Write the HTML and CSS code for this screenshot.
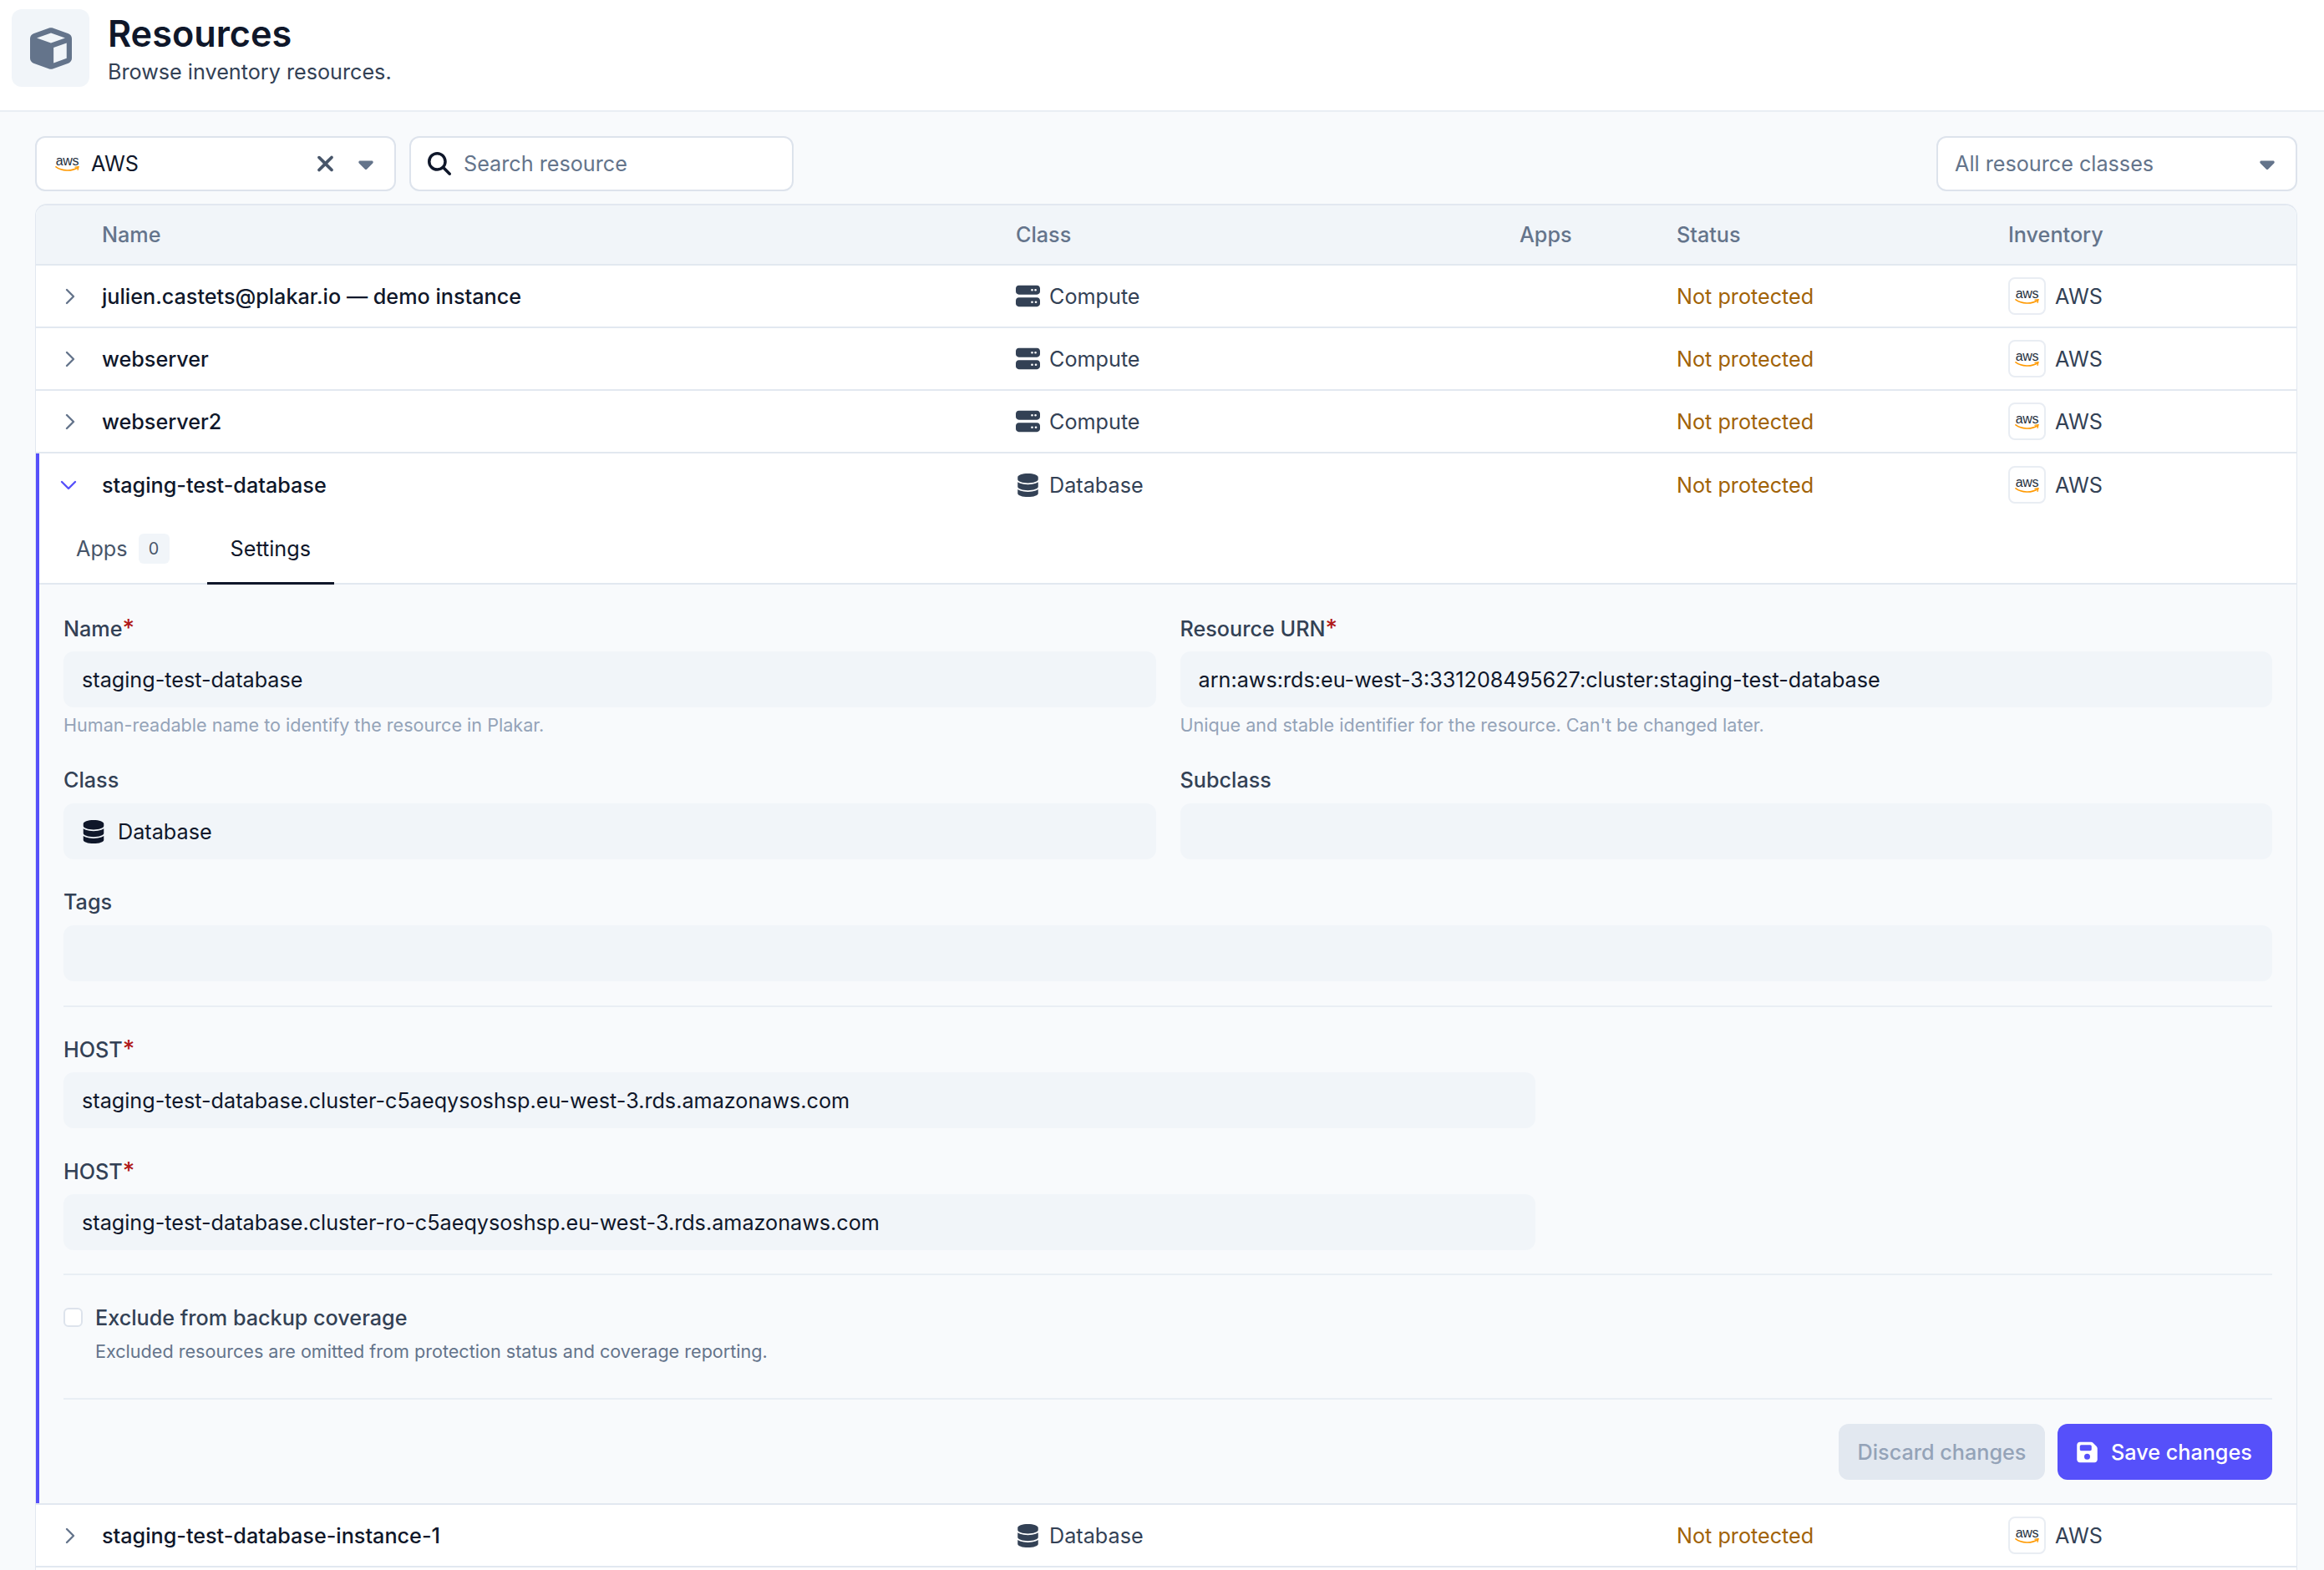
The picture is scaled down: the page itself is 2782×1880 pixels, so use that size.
FILE: index.html
```html
<!DOCTYPE html>
<html>
<head>
    <title>Resources</title>
    <link rel="stylesheet" href="styles.css">
</head>
<body>
    <svg class="sprites" xmlns="http://www.w3.org/2000/svg">
        <symbol id="i-cube" viewBox="0 0 512 512"><path d="M234.5 5.7c13.9-5 29.1-5 43.1 0l192 68.6C495 83.4 512 107.5 512 134.6V377.4c0 27-17 51.2-42.5 60.3l-192 68.6c-13.9 5-29.1 5-43.1 0l-192-68.6C17 428.6 0 404.5 0 377.4V134.6c0-27 17-51.2 42.5-60.3l192-68.6zM256 66L82.3 128 256 190l173.7-62L256 66zm32 368.6l160-57.1v-188L288 246.6v188z"/></symbol>
        <symbol id="i-server" viewBox="0 0 512 512"><path d="M64 32C28.7 32 0 60.7 0 96v64c0 35.3 28.7 64 64 64H448c35.3 0 64-28.7 64-64V96c0-35.3-28.7-64-64-64H64zm280 72a24 24 0 1 1 0 48 24 24 0 1 1 0-48zm48 24a24 24 0 1 1 48 0 24 24 0 1 1 -48 0zM64 288c-35.3 0-64 28.7-64 64v64c0 35.3 28.7 64 64 64H448c35.3 0 64-28.7 64-64V352c0-35.3-28.7-64-64-64H64zm280 72a24 24 0 1 1 0 48 24 24 0 1 1 0-48zm56 24a24 24 0 1 1 48 0 24 24 0 1 1 -48 0z"/></symbol>
        <symbol id="i-database" viewBox="0 0 448 512"><path d="M448 80v48c0 44.2-100.3 80-224 80S0 172.2 0 128V80C0 35.8 100.3 0 224 0S448 35.8 448 80zM393.2 214.7c20.8-7.4 39.9-16.9 54.8-28.6V288c0 44.2-100.3 80-224 80S0 332.2 0 288V186.1c14.9 11.8 34 21.2 54.8 28.6C99.7 230.7 159.5 240 224 240s124.3-9.3 169.2-25.3zM0 346.1c14.9 11.8 34 21.2 54.8 28.6C99.7 390.7 159.5 400 224 400s124.3-9.3 169.2-25.3c20.8-7.4 39.9-16.9 54.8-28.6V432c0 44.2-100.3 80-224 80S0 476.2 0 432V346.1z"/></symbol>
        <symbol id="i-save" viewBox="0 0 448 512"><path d="M64 32C28.7 32 0 60.7 0 96V416c0 35.3 28.7 64 64 64H384c35.3 0 64-28.7 64-64V173.3c0-17-6.7-33.3-18.7-45.3L352 50.7C340 38.7 323.7 32 306.7 32H64zm0 96c0-17.7 14.3-32 32-32H288c17.7 0 32 14.3 32 32v64c0 17.7-14.3 32-32 32H96c-17.7 0-32-14.3-32-32V128zM224 288a64 64 0 1 1 0 128 64 64 0 1 1 0-128z"/></symbol>
        <symbol id="i-search" viewBox="0 0 512 512"><path d="M416 208c0 45.9-14.9 88.3-40 122.7L502.6 457.4c12.5 12.5 12.5 32.8 0 45.3s-32.8 12.5-45.3 0L330.7 376c-34.4 25.2-76.8 40-122.7 40C93.1 416 0 322.9 0 208S93.1 0 208 0S416 93.1 416 208zM208 352a144 144 0 1 0 0-288 144 144 0 1 0 0 288z"/></symbol>
        <symbol id="i-x" viewBox="0 0 384 512"><path d="M342.6 150.6c12.5-12.5 12.5-32.8 0-45.3s-32.8-12.5-45.3 0L192 210.7 86.6 105.4c-12.5-12.5-32.8-12.5-45.3 0s-12.5 32.8 0 45.3L146.7 256 41.4 361.4c-12.5 12.5-12.5 32.8 0 45.3s32.8 12.5 45.3 0L192 301.3 297.4 406.6c12.5 12.5 32.8 12.5 45.3 0s12.5-32.8 0-45.3L237.3 256 342.6 150.6z"/></symbol>
        <symbol id="i-caret" viewBox="0 0 320 512"><path d="M137.4 374.6c12.5 12.5 32.8 12.5 45.3 0l128-128c9.2-9.2 11.9-22.9 6.9-34.9s-16.6-19.8-29.6-19.8L32 192c-12.9 0-24.6 7.8-29.6 19.8s-2.2 25.7 6.9 34.9l128 128z"/></symbol>
        <symbol id="i-smile" viewBox="0 0 29 7"><path d="M1 .8C8 6 20 6.2 26.6 2" fill="none" stroke="#f90" stroke-width="1.6" stroke-linecap="round"/><path d="M24 1.2l4-.5-.9 3.6" fill="none" stroke="#f90" stroke-width="1.3" stroke-linecap="round"/></symbol>
    </svg>

    <header class="page-header">
        <div class="header-icon"><svg><use href="#i-cube"/></svg></div>
        <div>
            <h1>Resources</h1>
            <p class="subtitle">Browse inventory resources.</p>
        </div>
    </header>

    <main class="content">
        <div class="toolbar">
            <div class="control control-inventory">
                <span class="aws-mark"><span class="aws-word">aws</span><svg class="aws-smile"><use href="#i-smile"/></svg></span>
                <span class="control-value">AWS</span>
                <svg class="icon-x"><use href="#i-x"/></svg>
                <svg class="icon-caret"><use href="#i-caret"/></svg>
            </div>
            <div class="control control-search">
                <svg class="icon-search"><use href="#i-search"/></svg>
                <span class="placeholder">Search resource</span>
            </div>
            <div class="control control-class">
                <span class="placeholder">All resource classes</span>
                <svg class="icon-caret"><use href="#i-caret"/></svg>
            </div>
        </div>

        <div class="table">
            <div class="row row-head">
                <span></span>
                <span>Name</span>
                <span>Class</span>
                <span>Apps</span>
                <span>Status</span>
                <span>Inventory</span>
            </div>

            <div class="row">
                <svg class="chevron" viewBox="0 0 12 20"><path d="M2 2l8 8-8 8"/></svg>
                <span class="name">julien.castets@plakar.io — demo instance</span>
                <span class="cell-class"><svg class="icon-class"><use href="#i-server"/></svg>Compute</span>
                <span></span>
                <span class="status">Not protected</span>
                <span class="inventory"><span class="aws-box"><span class="aws-mark"><span class="aws-word">aws</span><svg class="aws-smile"><use href="#i-smile"/></svg></span></span>AWS</span>
            </div>
            <div class="row">
                <svg class="chevron" viewBox="0 0 12 20"><path d="M2 2l8 8-8 8"/></svg>
                <span class="name">webserver</span>
                <span class="cell-class"><svg class="icon-class"><use href="#i-server"/></svg>Compute</span>
                <span></span>
                <span class="status">Not protected</span>
                <span class="inventory"><span class="aws-box"><span class="aws-mark"><span class="aws-word">aws</span><svg class="aws-smile"><use href="#i-smile"/></svg></span></span>AWS</span>
            </div>
            <div class="row">
                <svg class="chevron" viewBox="0 0 12 20"><path d="M2 2l8 8-8 8"/></svg>
                <span class="name">webserver2</span>
                <span class="cell-class"><svg class="icon-class"><use href="#i-server"/></svg>Compute</span>
                <span></span>
                <span class="status">Not protected</span>
                <span class="inventory"><span class="aws-box"><span class="aws-mark"><span class="aws-word">aws</span><svg class="aws-smile"><use href="#i-smile"/></svg></span></span>AWS</span>
            </div>

            <div class="expanded">
                <div class="row row-open">
                    <svg class="chevron chevron-open" viewBox="0 0 20 12"><path d="M2 2l8 8 8-8"/></svg>
                    <span class="name">staging-test-database</span>
                    <span class="cell-class"><svg class="icon-class icon-db"><use href="#i-database"/></svg>Database</span>
                    <span></span>
                    <span class="status">Not protected</span>
                    <span class="inventory"><span class="aws-box"><span class="aws-mark"><span class="aws-word">aws</span><svg class="aws-smile"><use href="#i-smile"/></svg></span></span>AWS</span>
                </div>

                <div class="tabs">
                    <div class="tab">Apps <span class="tab-count">0</span></div>
                    <div class="tab tab-active">Settings</div>
                </div>

                <div class="settings">
                    <div class="grid-two">
                        <div class="field">
                            <label>Name<span class="req">*</span></label>
                            <div class="input">staging-test-database</div>
                            <p class="hint">Human-readable name to identify the resource in Plakar.</p>
                        </div>
                        <div class="field">
                            <label>Resource URN<span class="req">*</span></label>
                            <div class="input">arn:aws:rds:eu-west-3:331208495627:cluster:staging-test-database</div>
                            <p class="hint">Unique and stable identifier for the resource. Can't be changed later.</p>
                        </div>
                        <div class="field">
                            <label>Class</label>
                            <div class="input"><svg class="icon-input"><use href="#i-database"/></svg>Database</div>
                        </div>
                        <div class="field">
                            <label>Subclass</label>
                            <div class="input"></div>
                        </div>
                    </div>
                    <div class="field field-tags">
                        <label>Tags</label>
                        <div class="input"></div>
                    </div>

                    <hr class="divider">

                    <div class="hosts">
                        <div class="field">
                            <label>HOST<span class="req">*</span></label>
                            <div class="input">staging-test-database.cluster-c5aeqysoshsp.eu-west-3.rds.amazonaws.com</div>
                        </div>
                        <div class="field">
                            <label>HOST<span class="req">*</span></label>
                            <div class="input">staging-test-database.cluster-ro-c5aeqysoshsp.eu-west-3.rds.amazonaws.com</div>
                        </div>
                    </div>

                    <hr class="divider divider-exclude">

                    <div class="exclude">
                        <span class="checkbox"></span>
                        <div>
                            <div class="exclude-title">Exclude from backup coverage</div>
                            <div class="exclude-desc">Excluded resources are omitted from protection status and coverage reporting.</div>
                        </div>
                    </div>

                    <hr class="divider divider-actions">

                    <div class="actions">
                        <button class="btn btn-discard">Discard changes</button>
                        <button class="btn btn-save"><svg class="icon-save"><use href="#i-save"/></svg>Save changes</button>
                    </div>
                </div>
            </div>

            <div class="row">
                <svg class="chevron" viewBox="0 0 12 20"><path d="M2 2l8 8-8 8"/></svg>
                <span class="name">staging-test-database-instance-1</span>
                <span class="cell-class"><svg class="icon-class icon-db"><use href="#i-database"/></svg>Database</span>
                <span></span>
                <span class="status">Not protected</span>
                <span class="inventory"><span class="aws-box"><span class="aws-mark"><span class="aws-word">aws</span><svg class="aws-smile"><use href="#i-smile"/></svg></span></span>AWS</span>
            </div>
            <div class="row-rest"></div>
        </div>
    </main>
</body>
</html>
```

FILE: styles.css
```css
* {
    box-sizing: border-box;
}

html, body {
    height: 1880px;
    overflow: hidden;
}

body {
    margin: 0;
    background: #f8fafc;
    color: #0f172a;
    font-family: Inter, "Liberation Sans", sans-serif;
    font-size: 25.2px;
    line-height: 30px;
}

.sprites {
    display: none;
}

svg {
    fill: currentColor;
    flex: none;
}

/* page header */
.page-header {
    height: 134px;
    padding: 11px 14px;
    display: flex;
    gap: 22px;
    background: #fff;
    border-bottom: 2px solid #e9eef4;
}

.header-icon {
    width: 93px;
    height: 93px;
    display: flex;
    align-items: center;
    justify-content: center;
    border-radius: 12px;
    background: #f1f5f9;
    color: #64748b;
}

.header-icon svg {
    width: 50px;
    height: 50px;
}

h1 {
    margin: 2px 0 0;
    font-size: 43.2px;
    line-height: 54px;
    font-weight: 600;
}

.subtitle {
    margin: 4px 0 0;
    color: #334155;
}

/* filters */
.content {
    padding: 29px 32px 0 42px;
}

.toolbar {
    display: flex;
    gap: 16px;
    margin-bottom: 15px;
}

.control {
    height: 66px;
    display: flex;
    align-items: center;
    background: #fff;
    border: 2px solid #dde3ec;
    border-radius: 12px;
}

.control-inventory {
    width: 432px;
    padding: 0 25px 0 22px;
}

.control-value {
    margin-left: 14px;
    flex: 1;
}

.control-search {
    width: 460px;
    padding: 0 20px;
    gap: 15px;
}

.control-class {
    width: 432px;
    margin-left: auto;
    padding: 0 25px 0 20px;
    justify-content: space-between;
}

.placeholder {
    color: #64748b;
}

.icon-x {
    width: 23px;
    height: 30px;
    margin-right: 28px;
    color: #475569;
}

.icon-caret {
    width: 18px;
    height: 28px;
    color: #64748b;
}

.icon-search {
    width: 28px;
    height: 28px;
}

/* aws logo */
.aws-mark {
    display: inline-flex;
    flex-direction: column;
    align-items: center;
    width: 29px;
    color: #252f3e;
}

.aws-word {
    font-family: "Liberation Sans", sans-serif;
    font-size: 16px;
    line-height: 13px;
    letter-spacing: -0.4px;
}

.aws-smile {
    width: 29px;
    height: 7px;
}

.aws-box {
    width: 45px;
    height: 45px;
    display: flex;
    align-items: center;
    justify-content: center;
    background: #fff;
    border: 2px solid #e9edf3;
    border-radius: 8px;
}

/* table */
.table {
    background: #fff;
    border: solid #e2e8f0;
    border-width: 2px 1px 0;
    border-radius: 14px 14px 0 0;
    overflow: hidden;
}

.row {
    height: 75px;
    display: grid;
    grid-template-columns: 79px 1094px 603px 188px 397px 1fr;
    align-items: center;
    border-bottom: 2px solid #e2e8f0;
}

.row-head {
    height: 72px;
    background: #f1f5f9;
    color: #64748b;
    font-weight: 500;
}

.row-open {
    border-bottom: 0;
}

.chevron {
    width: 12px;
    height: 20px;
    margin-left: 35px;
    fill: none;
    stroke: #64748b;
    stroke-width: 2.4;
    stroke-linecap: round;
    stroke-linejoin: round;
}

.chevron-open {
    width: 20px;
    height: 12px;
    margin-left: 29px;
    stroke: #5650fa;
}

.name {
    font-weight: 500;
}

.cell-class {
    display: flex;
    align-items: center;
    gap: 11px;
    color: #334155;
}

.icon-class {
    width: 29px;
    height: 29px;
    color: #334155;
}

.icon-db {
    width: 29px;
    height: 28px;
}

.status {
    color: #a16207;
}

.inventory {
    display: flex;
    align-items: center;
    gap: 11px;
    color: #334155;
}

.row-rest {
    height: 5px;
}

/* expanded row */
.expanded {
    position: relative;
    border-bottom: 2px solid #e2e8f0;
}

.expanded::before {
    content: "";
    position: absolute;
    left: 0;
    top: 0;
    bottom: 0;
    width: 4px;
    background: #5650fa;
}

.tabs {
    height: 82px;
    display: flex;
    padding-left: 32px;
    gap: 17px;
    background: #fff;
    border-bottom: 2px solid #e2e8f0;
}

.tab {
    height: 82px;
    display: flex;
    align-items: center;
    gap: 13px;
    padding: 0 28px 5px 16px;
    color: #475569;
}

.tab-active {
    padding: 0 28px 2px;
    color: #0f172a;
    border-bottom: 3px solid #0f172a;
}

.tab-count {
    width: 37px;
    height: 36px;
    display: flex;
    align-items: center;
    justify-content: center;
    background: #f1f5f9;
    border-radius: 6px;
    font-size: 19.8px;
}

.settings {
    padding: 37px 29px 28px 33px;
    background: #f8fafc;
}

.grid-two {
    display: grid;
    grid-template-columns: 1fr 1fr;
    column-gap: 29px;
    row-gap: 37px;
}

.field label {
    display: block;
    height: 30px;
    margin-bottom: 13px;
    color: #334155;
    font-weight: 500;
}

.req {
    color: #b01818;
    font-size: 28px;
}

.input {
    height: 67px;
    display: flex;
    align-items: center;
    padding: 0 22px;
    background: #f1f5f9;
    border-radius: 12px;
}

.icon-input {
    width: 26px;
    height: 28px;
    margin: 0 16px 0 1px;
}

.hint {
    margin: 7px 0 0;
    color: #94a3b8;
    font-size: 21.6px;
    line-height: 28px;
}

.field-tags {
    margin-top: 36px;
}

.divider {
    margin: 29px 0 35px;
    height: 2px;
    border: 0;
    background: #e9eef4;
}

.hosts {
    width: 1762px;
    display: flex;
    flex-direction: column;
    gap: 36px;
}

.divider-exclude {
    margin: 28px 0 36px;
}

.exclude {
    display: flex;
    gap: 15px;
    margin-top: 4px;
}

.checkbox {
    width: 23px;
    height: 23px;
    margin-top: 3px;
    background: #fff;
    border: 2px solid #dde3ec;
    border-radius: 6px;
}

.exclude-title {
    color: #334155;
    font-weight: 500;
}

.exclude-desc {
    margin-top: 11px;
    color: #64748b;
    font-size: 21.6px;
    line-height: 28px;
}

.divider-actions {
    margin: 42px 0 29px;
}

.actions {
    display: flex;
    justify-content: flex-end;
    gap: 15px;
}

.btn {
    height: 67px;
    display: flex;
    align-items: center;
    padding: 0 23px;
    border: 0;
    border-radius: 12px;
    white-space: nowrap;
    font: 500 25.2px/30px Inter, "Liberation Sans", sans-serif;
}

.btn-discard {
    width: 247px;
    justify-content: center;
    background: #e2e8f0;
    color: #94a3b8;
}

.btn-save {
    width: 257px;
    background: #5650fa;
    color: #fff;
    gap: 16px;
}

.icon-save {
    width: 25px;
    height: 28px;
}
```
